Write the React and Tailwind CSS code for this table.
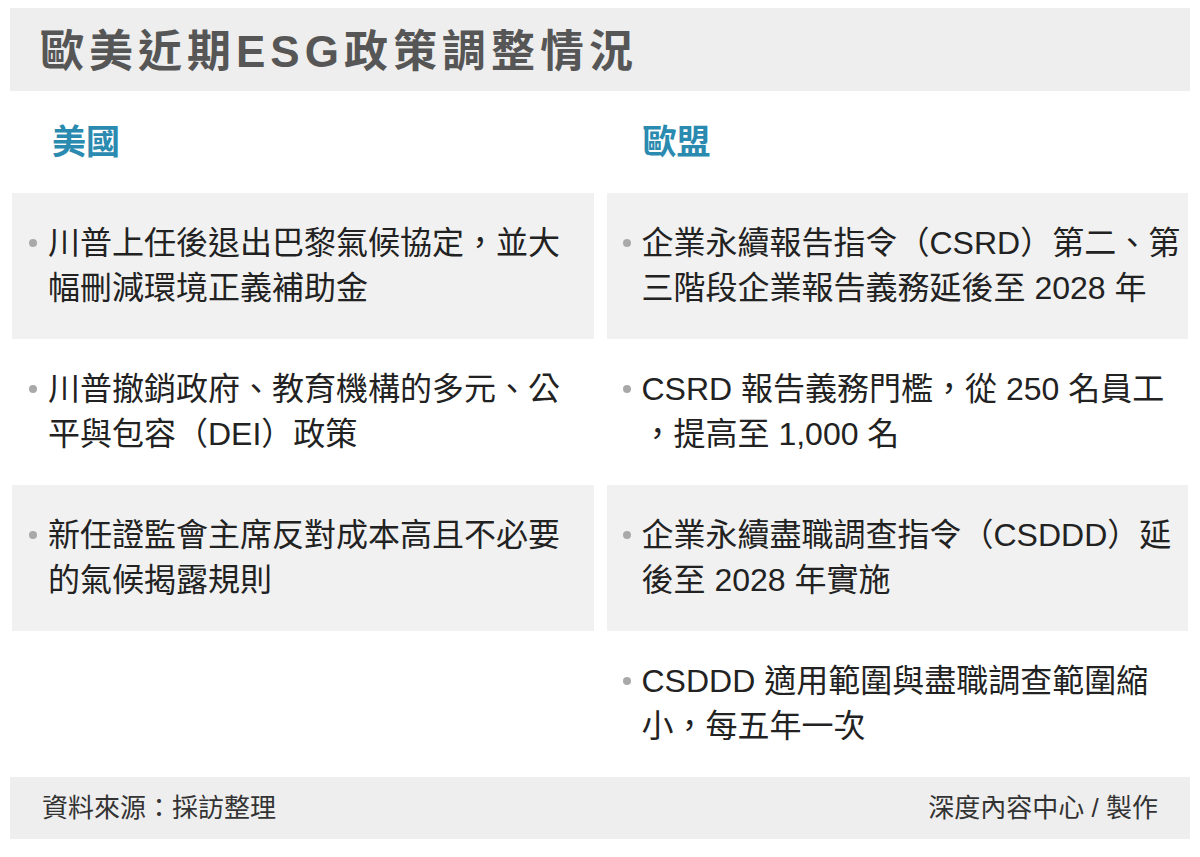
import React from 'react';

const FONT = { fontFamily: '"Liberation Sans", "Noto Sans CJK TC", sans-serif' };

const rows = [
  {
    us: ['川普上任後退出巴黎氣候協定，並大', '幅刪減環境正義補助金'],
    eu: ['企業永續報告指令（CSRD）第二、第', '三階段企業報告義務延後至 2028 年'],
    gray: true,
  },
  {
    us: ['川普撤銷政府、教育機構的多元、公', '平與包容（DEI）政策'],
    eu: ['CSRD 報告義務門檻，從 250 名員工', '，提高至 1,000 名'],
    gray: false,
  },
  {
    us: ['新任證監會主席反對成本高且不必要', '的氣候揭露規則'],
    eu: ['企業永續盡職調查指令（CSDDD）延', '後至 2028 年實施'],
    gray: true,
  },
  {
    us: null,
    eu: ['CSDDD 適用範圍與盡職調查範圍縮', '小，每五年一次'],
    gray: false,
  },
];

const Item = ({ lines, gray, pad }) => (
  <div className={`h-[146px] flex items-center ${pad} ${gray ? 'bg-[#f1f1f1]' : 'bg-white'}`}>
    {lines && (
      <div className="flex items-start">
        <span className="w-[8px] h-[8px] rounded-full bg-[#a9a9a9] mt-[18px] mr-[11px] shrink-0"></span>
        <div className="text-[32px] leading-[45px] text-[#222] whitespace-nowrap">
          {lines.map((l, i) => (
            <div key={i}>{l}</div>
          ))}
        </div>
      </div>
    )}
  </div>
);

export default function App() {
  return (
    <div className="w-[1200px] h-[857px] bg-white px-[10px] pt-[8px]" style={FONT}>
      <div className="h-[83px] bg-[#eeeeee] flex items-center pl-[30px] pt-[4px]">
        <h1 className="text-[44px] font-bold tracking-[5px] text-[#565656]">歐美近期ESG政策調整情況</h1>
      </div>

      <div className="grid grid-cols-2 gap-x-[13px] px-[2px]">
        <div className="h-[102px] flex items-center pl-[40px] text-[34px] font-bold text-[#2a8ab0]">美國</div>
        <div className="h-[102px] flex items-center pl-[36px] text-[34px] font-bold text-[#2a8ab0]">歐盟</div>
        {rows.map((r, i) => (
          <React.Fragment key={i}>
            <Item lines={r.us} gray={r.gray} pad="pl-[17px]" />
            <Item lines={r.eu} gray={r.gray} pad="pl-[16px]" />
          </React.Fragment>
        ))}
      </div>

      <div className="h-[62px] bg-[#eeeeee] flex items-center justify-between px-[32px] text-[26px] text-[#333]">
        <span>資料來源：採訪整理</span>
        <span>深度內容中心 / 製作</span>
      </div>
    </div>
  );
}
